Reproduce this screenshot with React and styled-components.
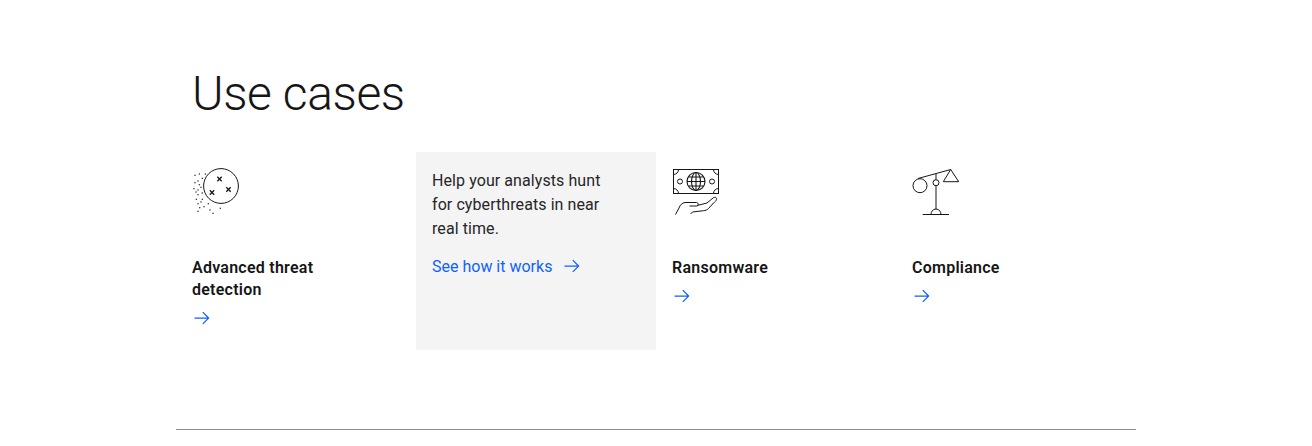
import React from 'react'
import styled, { createGlobalStyle } from 'styled-components'

const GlobalStyle = createGlobalStyle`
  body {
    margin: 0;
    background: #fff;
    font-family: Roboto, 'Noto Sans', 'Liberation Sans', sans-serif;
    color: #161616;
  }
`

const Page = styled.main`
  width: 960px;
  margin: 0 auto;
  padding-top: 63px;
`

const Title = styled.h2`
  margin: 0 0 27px;
  padding-left: 16px;
  font-size: 48px;
  line-height: 62px;
  font-weight: 300;
  letter-spacing: -0.4px;
  color: #161616;
`

const Grid = styled.div`
  display: grid;
  grid-template-columns: repeat(4, 240px);
  padding-bottom: 79px;
  border-bottom: 1px solid #8d8d8d;
`

const Card = styled.div`
  height: 198px;
  box-sizing: border-box;
  padding: ${p => (p.$active ? '17px' : '16px')} 16px 16px;
  background: ${p => (p.$active ? '#f4f4f4' : 'transparent')};
`

const IconBox = styled.div`
  width: 48px;
  height: 48px;
  margin-bottom: 41px;
  svg { display: block; }
`

const CardTitle = styled.h3`
  margin: 0 0 7px;
  font-size: 16px;
  line-height: 22px;
  font-weight: 600;
  letter-spacing: 0.25px;
  max-width: 170px;
`

const Body = styled.p`
  margin: 0 0 15px;
  max-width: 176px;
  font-size: 16px;
  line-height: 24px;
  letter-spacing: 0.08px;
  color: #262626;
`

const MoreLink = styled.a`
  display: flex;
  align-items: center;
  gap: 10px;
  height: 20px;
  font-size: 16px;
  line-height: 20px;
  color: #0f62fe;
  text-decoration: none;
`

const LinkText = styled.span`
  padding-top: 2px;
`

const Arrow = () => (
  <svg width="20" height="20" viewBox="0 0 32 32" fill="#0f62fe" style={{ display: 'block' }}>
    <path d="M18 6 16.57 7.393 24.15 15 4 15 4 17 24.15 17 16.57 24.607 18 26 28 16 18 6z" />
  </svg>
)

const dots = [
  [3, 7.3], [7.3, 6], [13.3, 6], [3, 14.7], [6, 13], [10.3, 10.3], [7.3, 16.7], [9, 19.3],
  [2, 20.7], [6, 22], [4, 24], [10.3, 25], [6, 26.7], [4.3, 31.3], [10.3, 31.3], [6, 35.7],
  [9, 34], [16.3, 35.7], [12, 38.7], [7.7, 39.7], [6, 43.3], [18, 42], [21, 45.3], [28.3, 40.3],
]

const crosses = [[27.5, 11], [20, 24.5], [36.5, 21.5]]

const ThreatIcon = () => (
  <svg width="48" height="48" viewBox="0 0 48 48" fill="none" stroke="#161616">
    <circle cx="29" cy="18" r="17.4" strokeWidth="1" />
    {crosses.map(([x, y]) => (
      <path key={x} d={`M${x - 2.2} ${y - 2.2}l4.4 4.4M${x + 2.2} ${y - 2.2}l-4.4 4.4`} strokeWidth="1.3" />
    ))}
    {dots.map(([x, y]) => (
      <rect key={`${x}-${y}`} x={x - 0.6} y={y - 0.6} width="1.2" height="1.2" fill="#161616" stroke="none" />
    ))}
  </svg>
)

const MoneyIcon = () => (
  <svg width="48" height="48" viewBox="0 0 48 48" fill="none" stroke="#161616" strokeWidth="1">
    <rect x="1.5" y="1.5" width="45" height="24" />
    <path d="M1.5 6.5a5 5 0 0 0 5-5M41.5 1.5a5 5 0 0 0 5 5M1.5 20.5a5 5 0 0 1 5 5M41.5 25.5a5 5 0 0 1 5-5" />
    <circle cx="8" cy="13.5" r="2.5" />
    <circle cx="40" cy="13.5" r="2.5" />
    <circle cx="24" cy="13.5" r="9" strokeWidth="1.1" />
    <ellipse cx="24" cy="13.5" rx="4.5" ry="9" strokeWidth="1.1" />
    <path d="M24 4.5v18M15 13.5h18M16.3 9h15.400M16.300 18h15.400" strokeWidth="1.1" />
    <path d="M3.500 46.500l3.500-6.500c1-3 3-5 6-5.500h11.500c2 0 2.500 3.500 0 3.500h-7" />
    <path d="M25 37.500l10-2.500 6-5c2-1.500 4-.5 3.500 1.500-.5 1.500-1.500 2.500-3 3.500l-5 5.500c-1.500 1.500-3 2-5 2.200l-11 1.300-2 2" />
  </svg>
)

const ComplianceIcon = () => (
  <svg width="48" height="48" viewBox="0 0 48 48" fill="none" stroke="#161616" strokeWidth="1">
    <circle cx="8" cy="17.700" r="7" />
    <path d="M6 10.500 38.700 1.500" />
    <path d="M38.700 1.500 31.300 13.700H46.700z" />
    <circle cx="24" cy="14.700" r="3" />
    <path d="M24 6v5.700M24 17.700V41" />
    <path d="M10.700 46.500H37" />
    <path d="M19 46.500a5 5.500 0 0 1 10 0" />
  </svg>
)

export default function App() {
  return (
    <>
      <GlobalStyle />
      <Page>
        <Title>Use cases</Title>
        <Grid>
          <Card>
            <IconBox><ThreatIcon /></IconBox>
            <CardTitle>Advanced threat detection</CardTitle>
            <MoreLink href="#"><Arrow /></MoreLink>
          </Card>
          <Card $active>
            <Body>Help your analysts hunt for cyberthreats in near real time.</Body>
            <MoreLink href="#"><LinkText>See how it works</LinkText><Arrow /></MoreLink>
          </Card>
          <Card>
            <IconBox><MoneyIcon /></IconBox>
            <CardTitle>Ransomware</CardTitle>
            <MoreLink href="#"><Arrow /></MoreLink>
          </Card>
          <Card>
            <IconBox><ComplianceIcon /></IconBox>
            <CardTitle>Compliance</CardTitle>
            <MoreLink href="#"><Arrow /></MoreLink>
          </Card>
        </Grid>
      </Page>
    </>
  )
}
